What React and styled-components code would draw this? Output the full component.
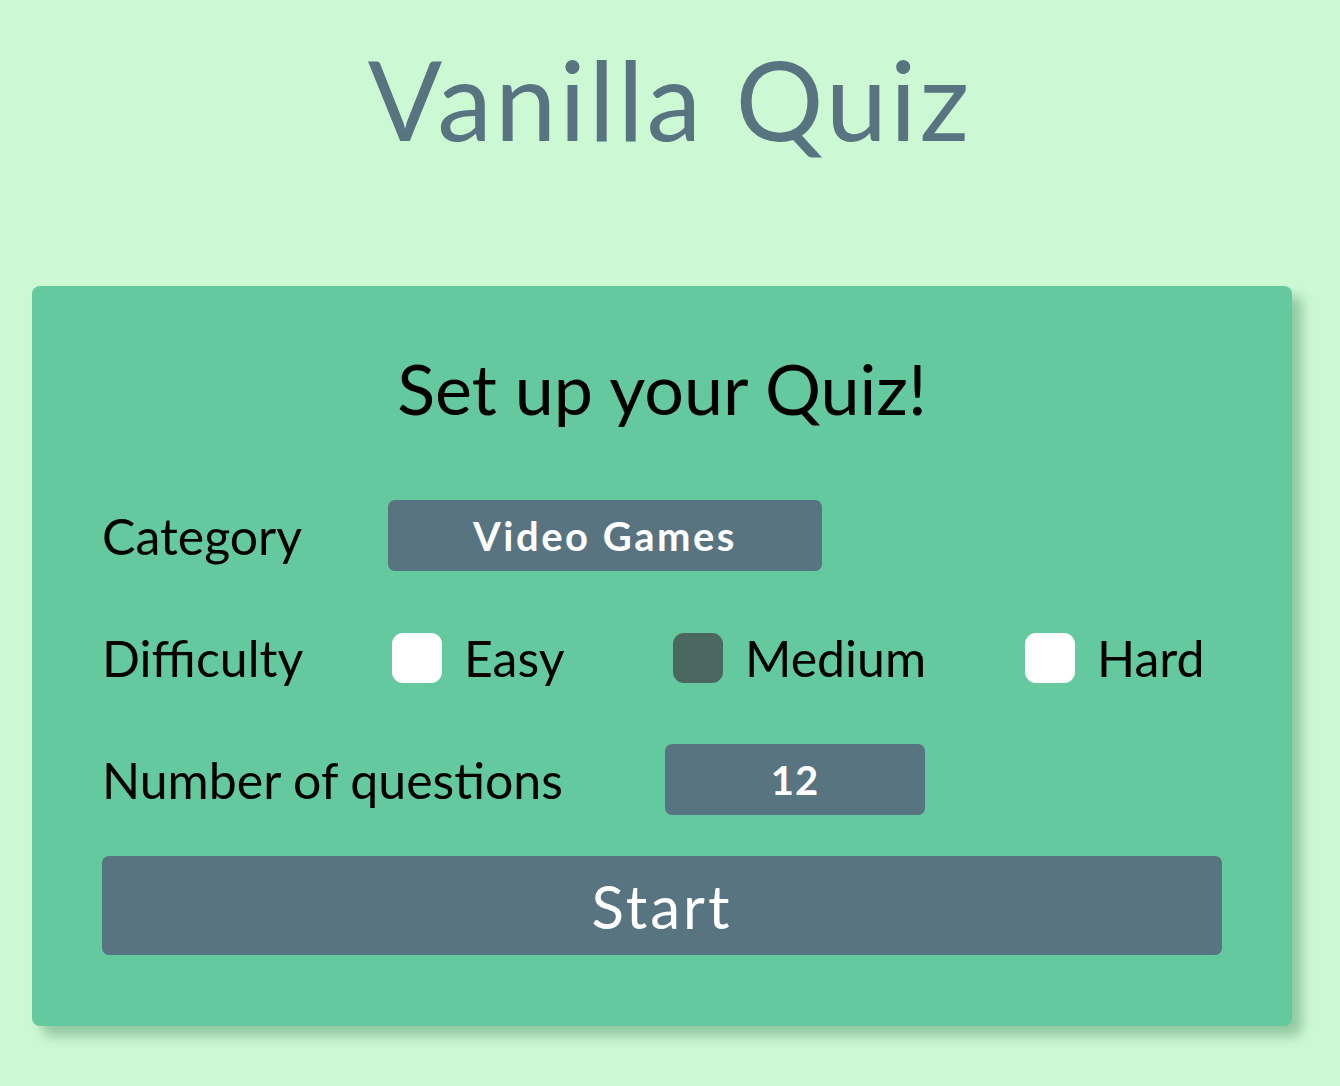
import styled, { createGlobalStyle } from "styled-components";

const GlobalStyle = createGlobalStyle`
  body {
    margin: 0;
    background: #ccf9d4;
    font-family: "Lato", "Noto Sans", sans-serif;
  }
`;

const Page = styled.div`
  width: 1340px;
  min-height: 1086px;
  padding-top: 1px;
  box-sizing: border-box;
`;

const Title = styled.h1`
  margin: 31px 0 0;
  text-align: center;
  font-size: 110px;
  font-weight: 400;
  letter-spacing: 3px;
  line-height: 1.2;
  color: #587480;
`;

const Card = styled.section`
  margin: 122px 48px 0 32px;
  padding: 0 70px 71px;
  background: #64c99f;
  border-radius: 8px;
  box-shadow: 10px 10px 12px rgba(40, 110, 70, 0.35);
`;

const Heading = styled.h2`
  margin: 0;
  padding-top: 60px;
  text-align: center;
  font-size: 70px;
  font-weight: 400;
  line-height: 1.2;
  color: #000;
`;

const Form = styled.div`
  display: flex;
  flex-direction: column;
  gap: 51px;
  margin-top: 70px;
`;

const Row = styled.div`
  display: flex;
  align-items: center;
  height: 71px;
`;

const Label = styled.div`
  width: ${(p) => p.$width}px;
  flex: none;
  font-size: 50px;
  color: #000;
`;

const Field = styled.div`
  width: ${(p) => p.$width}px;
  height: 71px;
  display: flex;
  align-items: center;
  justify-content: center;
  background: #587480;
  border-radius: 7px;
  color: #fff;
  font-size: ${(p) => p.$size}px;
  font-weight: 700;
  letter-spacing: ${(p) => p.$spacing}px;
`;

const Options = styled.div`
  display: grid;
  grid-template-columns: 281px 352px auto;
  align-items: center;
`;

const Option = styled.label`
  display: flex;
  align-items: center;
  gap: 22px;
  padding-left: 4px;
  font-size: 50px;
  color: #000;
`;

const Box = styled.span`
  width: 50px;
  height: 50px;
  border-radius: 11px;
  background: ${(p) => (p.$checked ? "#4b6760" : "#ffffff")};
`;

const StartButton = styled.button`
  margin-top: 41px;
  width: 100%;
  height: 99px;
  border: none;
  border-radius: 7px;
  background: #587480;
  color: #fff;
  font-family: inherit;
  font-size: 60px;
  letter-spacing: 3px;
`;

const levels = [
  { name: "Easy", checked: false },
  { name: "Medium", checked: true },
  { name: "Hard", checked: false },
];

export default function App() {
  return (
    <>
      <GlobalStyle />
      <Page>
        <Title>Vanilla Quiz</Title>
        <Card>
          <Heading>Set up your Quiz!</Heading>
          <Form>
            <Row>
              <Label $width={286}>Category</Label>
              <Field $width={434} $size={40} $spacing={2.5}>
                Video Games
              </Field>
            </Row>
            <Row>
              <Label $width={286}>Difficulty</Label>
              <Options>
                {levels.map((l) => (
                  <Option key={l.name}>
                    <Box $checked={l.checked} />
                    {l.name}
                  </Option>
                ))}
              </Options>
            </Row>
            <Row>
              <Label $width={563}>Number of questions</Label>
              <Field $width={260} $size={40} $spacing={1}>
                12
              </Field>
            </Row>
          </Form>
          <StartButton>Start</StartButton>
        </Card>
      </Page>
    </>
  );
}
